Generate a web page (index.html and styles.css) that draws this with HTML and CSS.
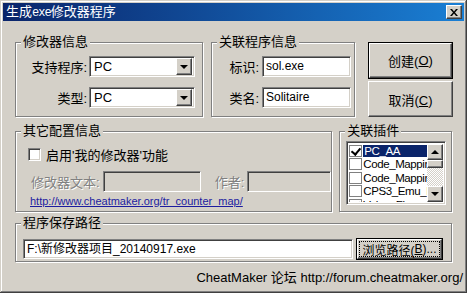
FILE: index.html
```html
<!DOCTYPE html>
<html lang="zh-CN">
<head>
    <meta charset="UTF-8">
    <meta name="viewport" content="width=device-width, initial-scale=1.0">
    <title>生成exe修改器程序</title>

    <link rel="stylesheet" href="styles.css">
</head>
<body>
<div class="window">
    <div class="titlebar">
        <span class="title">生成<span class="mono">exe</span>修改器程序</span>
        <span class="close raised">
            <svg width="8" height="7" viewBox="0 0 8 7"><path d="M0 0h2l2 2.5L6 0h2L5 3.5 8 7H6L4 4.5 2 7H0l3-3.5z" fill="#000"/></svg>
        </span>
    </div>

    <div class="body">
        <div class="row row-top">
            <fieldset class="group g-trainer">
                <legend>修改器信息</legend>
                <div class="form form-trainer">
                    <label>支持程序:</label>
                    <div class="combo sunken"><span>PC</span><i class="drop raised"><b class="arrow-down"></b></i></div>
                    <label>类型:</label>
                    <div class="combo sunken"><span>PC</span><i class="drop raised"><b class="arrow-down"></b></i></div>
                </div>
            </fieldset>

            <fieldset class="group g-target">
                <legend>关联程序信息</legend>
                <div class="form form-target">
                    <label>标识:</label>
                    <div class="field sunken">sol.exe</div>
                    <label>类名:</label>
                    <div class="field sunken">Solitaire</div>
                </div>
            </fieldset>

            <div class="actions">
                <button class="btn btn-default"><span class="btn-face raised">创建(<u>O</u>)</span></button>
                <button class="btn btn-plain raised">取消(<u>C</u>)</button>
            </div>
        </div>

        <div class="row row-mid">
            <fieldset class="group g-other">
                <legend>其它配置信息</legend>
                <div class="check-line">
                    <span class="checkbox sunken"></span>
                    <span>启用'我的修改器'功能</span>
                </div>
                <div class="disabled-line">
                    <label class="disabled">修改器文本:</label>
                    <div class="field sunken field-off field-text"></div>
                    <label class="disabled label-author">作者:</label>
                    <div class="field sunken field-off field-author"></div>
                </div>
                <a class="link" href="#">http://www.cheatmaker.org/tr_counter_map/</a>
            </fieldset>

            <fieldset class="group g-plugins">
                <legend>关联插件</legend>
                <div class="listbox sunken">
                    <ul class="items">
                        <li class="selected"><span class="checkbox small on"></span><span class="sel-text">PC_AA</span></li>
                        <li><span class="checkbox small"></span><span class="item-text">Code_Mapping</span></li>
                        <li><span class="checkbox small"></span><span class="item-text">Code_Mapping</span></li>
                        <li><span class="checkbox small"></span><span class="item-text">CPS3_Emu_Fix</span></li>
                        <li><span class="checkbox small on"></span><span class="item-text">Value_Fix</span></li>
                    </ul>
                    <div class="scrollbar">
                        <span class="sb-btn raised"><b class="arrow-up"></b></span>
                        <span class="sb-thumb raised"></span>
                        <span class="sb-track"></span>
                        <span class="sb-btn raised"><b class="arrow-down"></b></span>
                    </div>
                </div>
            </fieldset>
        </div>

        <fieldset class="group g-path">
            <legend>程序保存路径</legend>
            <div class="path-line">
                <div class="field sunken field-path">F:\新修改器项目_20140917.exe</div>
                <button class="btn btn-default btn-browse"><span class="btn-face raised"><span class="focus">浏览路径(<u>B</u>)...</span></span></button>
            </div>
        </fieldset>
    </div>

    <div class="status">CheatMaker 论坛 http://forum.cheatmaker.org/</div>
</div>
</body>
</html>
```

FILE: styles.css
```css
* {
    box-sizing: border-box;
}

body {
    margin: 0;
    background-color: #d4d0c8;
    font-family: "Liberation Sans", "Noto Sans CJK SC", sans-serif;
    font-size: 12px;
    color: #000;
}

.window {
    width: 467px;
    height: 293px;
    padding: 3px;
    background-color: #d4d0c8;
    box-shadow: inset -1px -1px #404040, inset 1px 1px #d4d0c8, inset -2px -2px #808080, inset 2px 2px #fff;
}

.raised {
    border: 1px solid;
    border-color: #fff #404040 #404040 #fff;
    box-shadow: inset -1px -1px #808080;
    background-color: #d4d0c8;
}

.sunken {
    border: 1px solid;
    border-color: #808080 #fff #fff #808080;
    box-shadow: inset 1px 1px #404040, inset -1px -1px #d4d0c8;
    background-color: #fff;
}

.titlebar {
    height: 18px;
    display: flex;
    align-items: center;
    justify-content: space-between;
    padding: 0 2px 0 3px;
    background: linear-gradient(to right, #0a246a, #1a7fd4);
    color: #fff;
}

.title {
    font-size: 13px;
    line-height: 18px;
}

.mono {
    font-family: "Liberation Mono", monospace;
    font-size: 12px;
    letter-spacing: -1px;
}

.close {
    width: 16px;
    height: 14px;
    display: flex;
    align-items: center;
    justify-content: center;
}

.body {
    padding: 14px 0 0 12px;
}

.row {
    display: flex;
    align-items: flex-start;
}

.group {
    flex: none;
    margin: 0;
    padding: 0;
    border: 1px solid #808080;
    box-shadow: inset 1px 1px #fff, 1px 1px #fff;
}

.group legend {
    margin-left: 5px;
    padding: 0 2px;
    line-height: 14px;
    font-size: 13px;
    background-color: #d4d0c8;
}

/* top row */
.g-trainer {
    width: 188px;
    height: 82px;
}

.g-target {
    width: 144px;
    height: 82px;
    margin-left: 8px;
}

.form {
    display: grid;
    align-items: center;
    row-gap: 10px;
    column-gap: 2px;
    padding-top: 7px;
}

.form label {
    text-align: right;
    font-size: 13px;
}

.form-trainer {
    grid-template-columns: 71px 106px;
    grid-auto-rows: 21px;
}

.form-target {
    grid-template-columns: 47px 89px;
    grid-auto-rows: 21px;
    column-gap: 3px;
}

.combo {
    height: 21px;
    display: flex;
    align-items: center;
    justify-content: space-between;
    padding: 0 2px 0 4px;
    font-size: 13px;
}

.drop {
    width: 16px;
    height: 17px;
    display: flex;
    align-items: center;
    justify-content: center;
}

.arrow-down {
    width: 0;
    height: 0;
    border-left: 4px solid transparent;
    border-right: 4px solid transparent;
    border-top: 4px solid #000;
}

.arrow-up {
    width: 0;
    height: 0;
    border-left: 4px solid transparent;
    border-right: 4px solid transparent;
    border-bottom: 4px solid #000;
}

.field {
    height: 21px;
    padding: 0 3px;
    line-height: 18px;
    font-size: 12px;
    white-space: nowrap;
}

.actions {
    display: flex;
    flex-direction: column;
    gap: 2px;
    margin: 7px 0 0 13px;
}

.btn {
    width: 85px;
    padding: 0;
    font-family: inherit;
    font-size: 13px;
    color: #000;
    cursor: pointer;
}

.btn-default {
    height: 37px;
    border: 1px solid #000;
    background-color: #d4d0c8;
}

.btn-face {
    display: flex;
    align-items: center;
    justify-content: center;
    height: 100%;
}

.btn-plain {
    height: 36px;
}

/* middle row */
.row-mid {
    margin-top: 7px;
}

.g-other {
    width: 316px;
    height: 88px;
}

.check-line {
    display: flex;
    align-items: center;
    gap: 5px;
    padding: 7px 0 0 12px;
    font-size: 13px;
}

.checkbox {
    display: inline-block;
    width: 13px;
    height: 13px;
    flex: none;
}

.disabled-line {
    display: flex;
    align-items: center;
    margin-top: 7px;
    padding-left: 15px;
}

.disabled {
    flex: none;
    white-space: nowrap;
    color: #808080;
    text-shadow: 1px 1px #fff;
    font-size: 13px;
}

.field-off {
    flex: none;
    background-color: #d4d0c8;
}

.field-text {
    width: 98px;
    margin-left: 3px;
}

.label-author {
    margin-left: 14px;
}

.field-author {
    width: 84px;
    margin-left: 3px;
}

.link {
    display: block;
    margin: 3px 0 0 14px;
    color: #1c1ca0;
    font-size: 11px;
    white-space: nowrap;
}

.g-plugins {
    width: 113px;
    height: 88px;
    margin-left: 7px;
}

.listbox {
    display: flex;
    width: 100px;
    height: 64px;
    margin: 3px 0 0 6px;
    padding: 2px;
    overflow: hidden;
}

.items {
    flex: 1;
    min-width: 0;
    margin: 0;
    padding: 0;
    list-style: none;
    overflow: hidden;
}

.items li {
    display: flex;
    align-items: center;
    gap: 1px;
    height: 13.5px;
    font-size: 11.5px;
    letter-spacing: -0.4px;
    white-space: nowrap;
}

.item-text {
    flex: none;
}

.checkbox.small {
    width: 13px;
    height: 12px;
    border: 1px solid #808080;
    box-shadow: none;
    background-color: #fff;
    position: relative;
}

.checkbox.on::after {
    content: "";
    position: absolute;
    left: 3px;
    top: 0;
    width: 4px;
    height: 7px;
    border: solid #000;
    border-width: 0 2px 2px 0;
    transform: rotate(40deg);
}

.selected .sel-text {
    flex: 1;
    padding-left: 1px;
    background-color: #0a246a;
    color: #fff;
}

.scrollbar {
    display: flex;
    flex-direction: column;
    width: 16px;
    flex: none;
}

.sb-btn {
    height: 16px;
    display: flex;
    align-items: center;
    justify-content: center;
    flex: none;
}

.sb-thumb {
    height: 8px;
    flex: none;
}

.sb-track {
    flex: 1;
    background-image: repeating-conic-gradient(#fff 0 25%, #d4d0c8 0 50%);
    background-size: 2px 2px;
}

/* bottom row */
.g-path {
    width: 437px;
    height: 46px;
    margin-top: 4px;
}

.path-line {
    display: flex;
    align-items: center;
    padding: 8px 0 0 7px;
}

.field-path {
    width: 330px;
    height: 20px;
}

.btn-browse {
    width: 87px;
    height: 22px;
    margin-left: 3px;
    font-size: 12px;
}

.focus {
    display: flex;
    align-items: center;
    justify-content: center;
    width: 100%;
    margin: 2px;
    height: 14px;
    outline: 1px dotted #000;
}

.status {
    padding: 9px 1px 0 0;
    text-align: right;
    font-size: 13px;
    line-height: 14px;
}
```
